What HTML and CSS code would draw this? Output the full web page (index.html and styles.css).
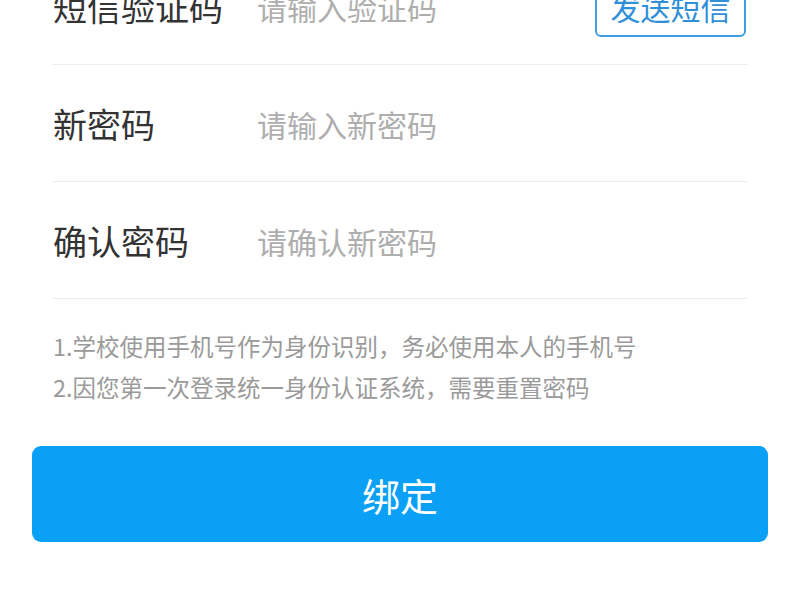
FILE: index.html
```html
<!DOCTYPE html>
<html lang="zh-CN">
<head>
<meta charset="utf-8">
<title>绑定手机号</title>
<link rel="stylesheet" href="styles.css">
</head>
<body>
<div class="page">
  <div class="form">
    <div class="row">
      <span class="label">短信验证码</span>
      <span class="placeholder">请输入验证码</span>
      <span class="send">发送短信</span>
    </div>
    <div class="row">
      <span class="label">新密码</span>
      <span class="placeholder">请输入新密码</span>
    </div>
    <div class="row">
      <span class="label">确认密码</span>
      <span class="placeholder">请确认新密码</span>
    </div>
  </div>
  <div class="notes">
    <p>1.学校使用手机号作为身份识别，务必使用本人的手机号</p>
    <p>2.因您第一次登录统一身份认证系统，需要重置密码</p>
  </div>
  <div class="action">
    <div class="bind">绑定</div>
  </div>
</div>
</body>
</html>
```
FILE: styles.css
```css
html, body {
  margin: 0;
  padding: 0;
  background: #ffffff;
}
body {
  font-family: "Noto Sans CJK SC", "Noto Sans", sans-serif;
  overflow: hidden;
}
.page {
  width: 800px;
  margin-top: -52px;
}
.form {
  padding: 0 53px;
}
.row {
  height: 116px;
  border-bottom: 1px solid #ececec;
  display: grid;
  grid-template-columns: 204px 1fr auto;
  align-items: center;
}
.label {
  font-size: 34px;
  color: #333333;
  line-height: 1;
  padding-top: 2px;
}
.placeholder {
  font-size: 30px;
  color: #aeaeae;
  line-height: 1;
  padding-top: 2px;
}
.send {
  box-sizing: border-box;
  width: 151px;
  height: 60px;
  margin-right: 1px;
  margin-top: 2px;
  border: 2px solid #3d9ee4;
  border-radius: 6px;
  color: #2f8fd8;
  font-size: 30px;
  display: flex;
  align-items: center;
  justify-content: center;
}
.notes {
  padding: 27px 53px 0;
}
.notes p {
  margin: 0;
  font-size: 23.5px;
  line-height: 41px;
  color: #9a9a9a;
}
.action {
  padding: 38px 32px 0;
}
.bind {
  height: 96px;
  background: #0aa0f5;
  border-radius: 9px;
  color: #ffffff;
  font-size: 38px;
  display: flex;
  align-items: center;
  justify-content: center;
}
```
